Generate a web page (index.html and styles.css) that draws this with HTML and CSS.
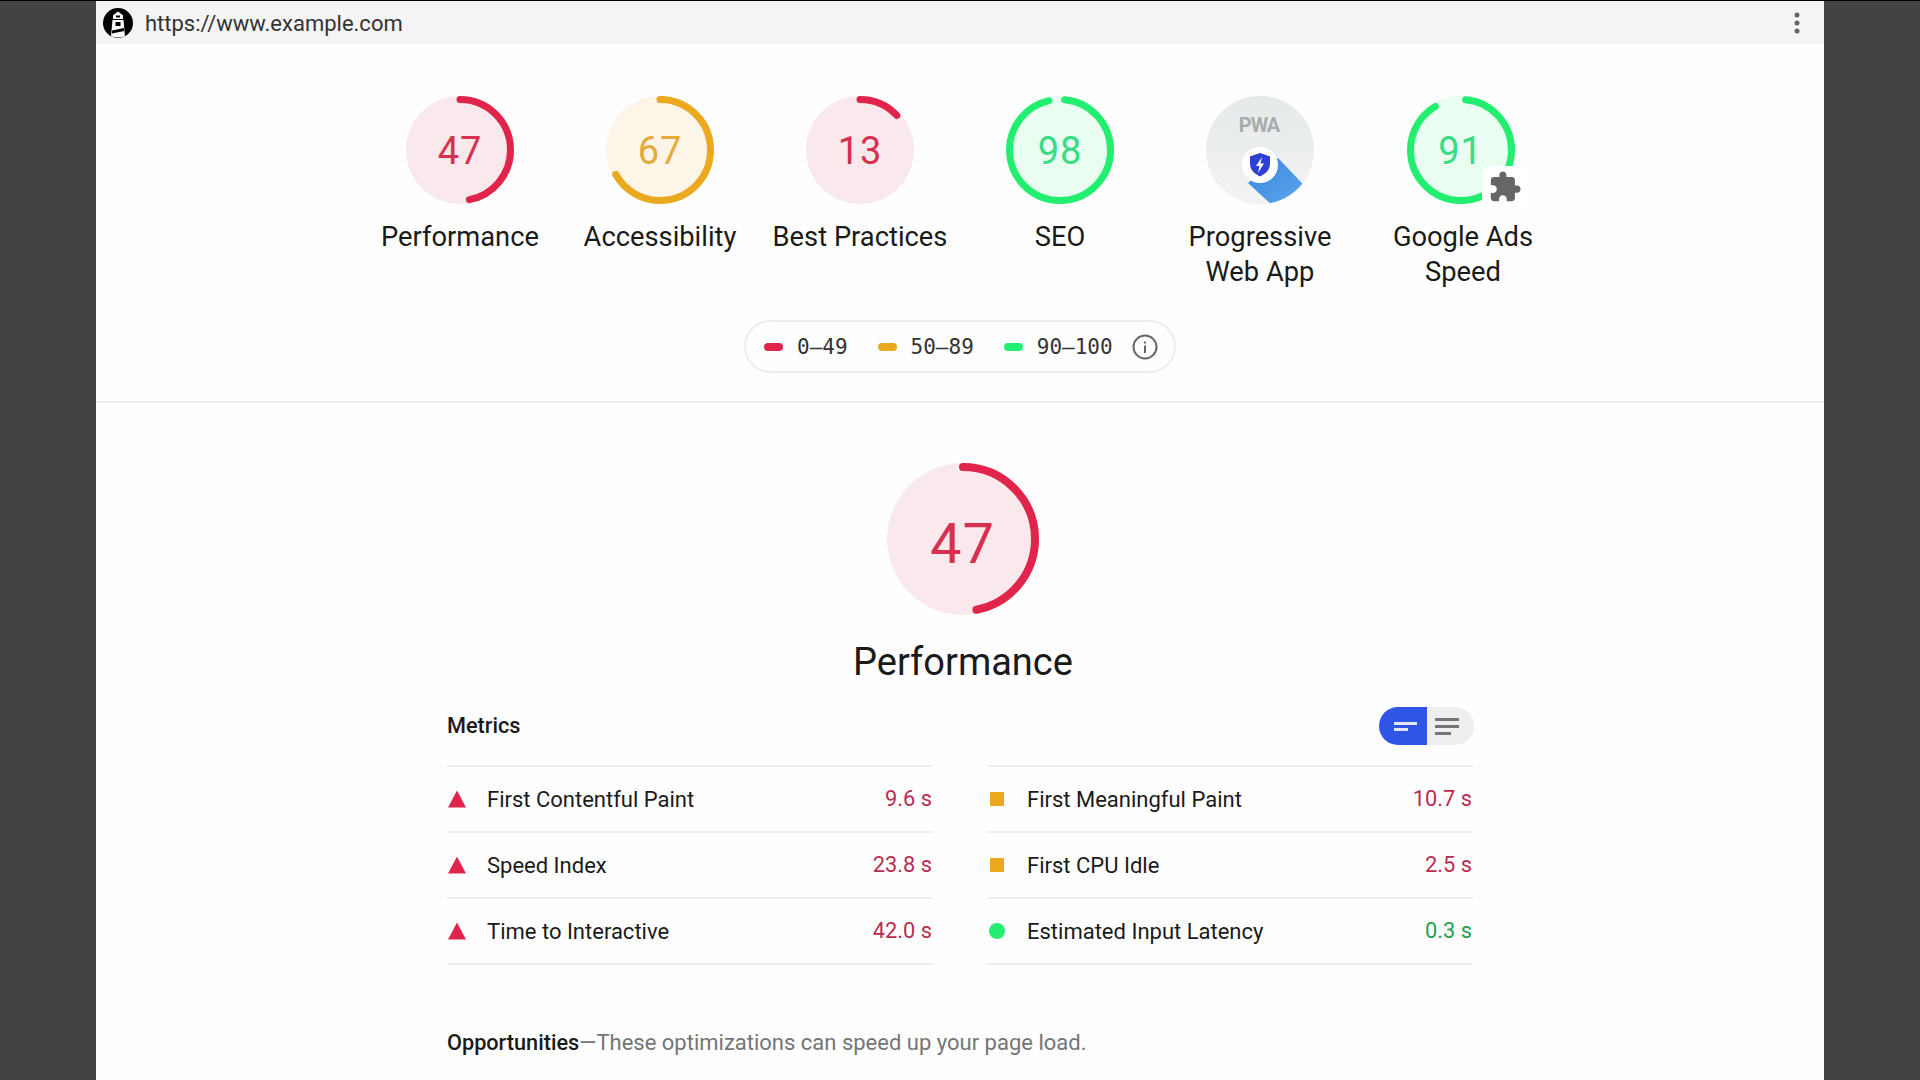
FILE: index.html
```html
<!DOCTYPE html>
<html lang="en">
<head>
    <meta charset="UTF-8">
    <title>Lighthouse Report</title>
    <link rel="stylesheet" href="styles.css">
</head>
<body>
    <div class="page">
        <header class="topbar">
            <svg class="logo" viewBox="0 0 30 30">
                <circle cx="15" cy="15" r="15" fill="#000"/>
                <path d="M15 3.500l5 3.800v3.700h-10V7.300z" fill="#fff"/>
                <path d="M9.500 12h11l1.500 16.500-7 1-7-1z" fill="#fff"/>
                <rect x="12.500" y="14" width="5" height="4" fill="#000"/>
                <path d="M9 22.500l12-2.500.3 3-12.300 2.500z" fill="#000"/>
                <rect x="13" y="7.500" width="4" height="2" fill="#000"/>
            </svg>
            <span class="url">https://www.example.com</span>
            <svg class="kebab" viewBox="0 0 6 22">
                <circle cx="3" cy="3" r="2.500"/>
                <circle cx="3" cy="11" r="2.500"/>
                <circle cx="3" cy="19" r="2.500"/>
            </svg>
        </header>

        <section class="tiles">
            <div class="tile">
                <div class="gauge red">
                    <svg viewBox="0 0 108 108"><circle class="fill" cx="54" cy="54" r="54"/><circle class="arc" cx="54" cy="54" r="50.500" pathLength="100" stroke-dasharray="47 100"/></svg>
                    <span class="score">47</span>
                </div>
                <div class="label">Performance</div>
            </div>
            <div class="tile">
                <div class="gauge orange">
                    <svg viewBox="0 0 108 108"><circle class="fill" cx="54" cy="54" r="54"/><circle class="arc" cx="54" cy="54" r="50.500" pathLength="100" stroke-dasharray="67 100"/></svg>
                    <span class="score">67</span>
                </div>
                <div class="label">Accessibility</div>
            </div>
            <div class="tile">
                <div class="gauge red">
                    <svg viewBox="0 0 108 108"><circle class="fill" cx="54" cy="54" r="54"/><circle class="arc" cx="54" cy="54" r="50.500" pathLength="100" stroke-dasharray="13 100"/></svg>
                    <span class="score">13</span>
                </div>
                <div class="label">Best Practices</div>
            </div>
            <div class="tile">
                <div class="gauge green">
                    <svg viewBox="0 0 108 108"><circle class="fill" cx="54" cy="54" r="54"/><circle class="arc" cx="54" cy="54" r="50.500" pathLength="100" stroke-dasharray="95 100" stroke-dashoffset="-1.500"/></svg>
                    <span class="score">98</span>
                </div>
                <div class="label">SEO</div>
            </div>
            <div class="tile">
                <div class="gauge">
                    <svg viewBox="0 0 108 108">
                        <defs>
                            <linearGradient id="pwaBg" x1="0" y1="0" x2="0" y2="1">
                                <stop offset="0" stop-color="#e6e9ea"/>
                                <stop offset="1" stop-color="#f1f3f4"/>
                            </linearGradient>
                            <linearGradient id="pwaTail" x1="0" y1="0" x2="1" y2="1">
                                <stop offset="0" stop-color="#3b86e2"/>
                                <stop offset="1" stop-color="#66aeee"/>
                            </linearGradient>
                            <clipPath id="pwaClip"><circle cx="54" cy="54" r="54"/></clipPath>
                        </defs>
                        <circle cx="54" cy="54" r="54" fill="url(#pwaBg)"/>
                        <polygon points="72,62 112,104 80,122 42,87" fill="url(#pwaTail)" clip-path="url(#pwaClip)"/>
                        <text class="pwa-text" x="53" y="36" text-anchor="middle">PWA</text>
                        <circle cx="54" cy="69" r="18" fill="#fff"/>
                        <path d="M54 57l10 3.500v7c0 6-4 10-10 13-6-3-10-7-10-13v-7z" fill="#2d3fd6"/>
                        <path d="M56 61l-6 9h3.500l-1.500 7 6-9.500h-3.500z" fill="#fff"/>
                    </svg>
                </div>
                <div class="label">Progressive<br>Web App</div>
            </div>
            <div class="tile">
                <div class="gauge gauge-ads green">
                    <svg viewBox="0 0 108 108"><circle class="fill" cx="54" cy="54" r="54"/><circle class="arc" cx="54" cy="54" r="50.500" pathLength="100" stroke-dasharray="90 100" stroke-dashoffset="-1.500"/></svg>
                    <span class="score">91</span>
                    <div class="badge">
                        <svg viewBox="0 0 24 24"><path d="M20.500 11H19V7c0-1.100-.9-2-2-2h-4V3.500C13 2.120 11.880 1 10.500 1S8 2.120 8 3.500V5H4c-1.100 0-1.990.9-1.990 2v3.800H3.500c1.490 0 2.700 1.210 2.700 2.700s-1.210 2.700-2.700 2.700H2V20c0 1.100.9 2 2 2h3.800v-1.500c0-1.490 1.210-2.700 2.700-2.700 1.490 0 2.700 1.210 2.700 2.700V22H17c1.100 0 2-.9 2-2v-4h1.500c1.380 0 2.500-1.120 2.500-2.500S21.880 11 20.500 11z"/></svg>
                    </div>
                </div>
                <div class="label label-ads">Google Ads<br>Speed</div>
            </div>
        </section>

        <div class="legend">
            <span class="range"><i class="dash bg-red"></i>0–49</span>
            <span class="range"><i class="dash bg-orange"></i>50–89</span>
            <span class="range range-last"><i class="dash bg-green"></i>90–100</span>
            <svg class="info" viewBox="0 0 26 26">
                <circle cx="13" cy="13" r="11.500" fill="none" stroke="#666" stroke-width="2"/>
                <rect x="12" y="11.500" width="2" height="7.500" fill="#666"/>
                <rect x="12" y="7.500" width="2" height="2" fill="#666"/>
            </svg>
        </div>

        <hr class="divider">

        <section class="category">
            <div class="gauge gauge-big red">
                <svg viewBox="0 0 152 152"><circle class="fill" cx="76" cy="76" r="76"/><circle class="arc" cx="76" cy="76" r="72" pathLength="100" stroke-dasharray="47 100"/></svg>
                <span class="score">47</span>
            </div>
            <h2 class="title">Performance</h2>

            <div class="metrics">
                <div class="metrics-head">
                    <span class="metrics-title">Metrics</span>
                    <div class="toggle">
                        <div class="toggle-on"><i class="line w23"></i><i class="line w14"></i></div>
                        <div class="toggle-off"><i class="line w24"></i><i class="line w24"></i><i class="line w16"></i></div>
                    </div>
                </div>
                <div class="metric-grid">
                    <div class="metric">
                        <i class="tri"></i><span class="name">First Contentful Paint</span><span class="value v-red">9.6 s</span>
                    </div>
                    <div class="metric">
                        <i class="square"></i><span class="name">First Meaningful Paint</span><span class="value v-red">10.7 s</span>
                    </div>
                    <div class="metric">
                        <i class="tri"></i><span class="name">Speed Index</span><span class="value v-red">23.8 s</span>
                    </div>
                    <div class="metric">
                        <i class="square"></i><span class="name">First CPU Idle</span><span class="value v-red">2.5 s</span>
                    </div>
                    <div class="metric">
                        <i class="tri"></i><span class="name">Time to Interactive</span><span class="value v-red">42.0 s</span>
                    </div>
                    <div class="metric">
                        <i class="dot"></i><span class="name">Estimated Input Latency</span><span class="value v-green">0.3 s</span>
                    </div>
                </div>
                <p class="opps"><strong>Opportunities</strong>—These optimizations can speed up your page load.</p>
            </div>
        </section>
    </div>
</body>
</html>
```

FILE: styles.css
```css
html, body {
    height: 100%;
}
body {
    margin: 0;
    background: #424441;
    border-top: 1px solid #000;
    box-sizing: border-box;
    overflow: hidden;
    font-family: Roboto, "Liberation Sans", sans-serif;
    color: #1a1a1a;
}
.page {
    width: 1728px;
    height: 1079px;
    margin: 0 auto;
    background: #fefefe;
    overflow: hidden;
}

/* url bar */
.topbar {
    display: flex;
    align-items: center;
    height: 43px;
    padding: 0 24px 0 7px;
    background: #f3f4f3;
}
.logo {
    width: 30px;
    height: 30px;
}
.url {
    margin-left: 12px;
    padding-top: 1px;
    font-size: 22px;
    color: #333;
}
.kebab {
    width: 6px;
    height: 22px;
    margin-left: auto;
    fill: #666;
}

/* score tiles */
.tiles {
    display: flex;
    justify-content: center;
    margin-top: 52px;
}
.tile {
    width: 200px;
    display: flex;
    flex-direction: column;
    align-items: center;
}
.gauge {
    position: relative;
    display: grid;
    place-items: center;
    width: 108px;
    height: 108px;
}
.gauge > svg {
    grid-area: 1 / 1;
    width: 100%;
    height: 100%;
    display: block;
}
.gauge .arc {
    fill: none;
    stroke-width: 7;
    stroke-linecap: round;
    transform: rotate(-90deg);
    transform-origin: center;
}
.gauge-big .arc {
    stroke-width: 8;
}
.gauge-ads {
    margin-left: 1px;
}
.score {
    grid-area: 1 / 1;
    position: relative;
    padding-top: 2px;
    font-size: 38px;
    font-weight: 400;
    letter-spacing: 1px;
}
.red .fill { fill: #f9e9ec; }
.red .arc { stroke: #e0244b; }
.red .score { color: #d8304f; }
.orange .fill { fill: #fdf6e8; }
.orange .arc { stroke: #eba91f; }
.orange .score { color: #e9a93a; }
.green .fill { fill: #e9fdf1; }
.green .arc { stroke: #22ee6f; }
.green .score { color: #38dc85; }
.pwa-text {
    font-family: Roboto, sans-serif;
    font-size: 20px;
    font-weight: 700;
    letter-spacing: -1px;
    fill: #a9abad;
}
.badge {
    position: absolute;
    left: 75px;
    top: 70px;
    width: 46px;
    height: 42px;
    display: flex;
    align-items: center;
    justify-content: center;
    background: #fff;
    border-radius: 10px;
}
.badge svg {
    width: 34px;
    height: 34px;
    fill: #666;
}
.label {
    margin-top: 16px;
    font-size: 27.300px;
    line-height: 35px;
    text-align: center;
    white-space: nowrap;
}
.label-ads {
    padding-left: 6px;
}

/* legend */
.legend {
    display: flex;
    align-items: center;
    box-sizing: border-box;
    width: 432px;
    height: 53px;
    margin: 30px auto 0;
    padding: 0 16px 0 18px;
    border: 2px solid #eee;
    border-radius: 27px;
    font-family: "DejaVu Sans Mono", monospace;
    font-size: 21px;
    color: #333;
}
.range {
    display: flex;
    align-items: center;
    margin-right: 30px;
    white-space: nowrap;
}
.range-last {
    margin-right: 0;
}
.dash {
    width: 19px;
    height: 8px;
    margin-right: 14px;
    border-radius: 4px;
}
.bg-red { background: #e0244b; }
.bg-orange { background: #eba91f; }
.bg-green { background: #22ee6f; }
.info {
    flex: none;
    width: 26px;
    height: 26px;
    margin-left: auto;
}
.divider {
    margin: 28px 0 0;
    border: 0;
    border-top: 2px solid #eee;
}

/* performance section */
.category {
    display: flex;
    flex-direction: column;
    align-items: center;
    margin-top: 60px;
}
.gauge-big {
    width: 152px;
    height: 152px;
    margin-left: 5px;
}
.gauge-big .score {
    padding-top: 9px;
    font-size: 56px;
}
.title {
    margin: 22px 0 0 6px;
    font-size: 38px;
    font-weight: 400;
    line-height: 50px;
}
.metrics {
    width: 1026px;
    margin-top: 20px;
}
.metrics-head {
    display: flex;
    align-items: center;
    justify-content: space-between;
    margin-bottom: 20px;
}
.metrics-title {
    padding-bottom: 2px;
    font-size: 21.700px;
    font-weight: 500;
}
.toggle {
    display: flex;
    height: 38px;
    width: 95px;
    margin-right: -1px;
}
.toggle-on, .toggle-off {
    display: flex;
    flex-direction: column;
    justify-content: center;
}
.toggle-on {
    width: 48px;
    background: #2f55e6;
    border-radius: 19px 0 0 19px;
    padding-left: 15px;
    box-sizing: border-box;
    gap: 3px;
}
.toggle-on .line { background: #dfe8ff; }
.toggle-off {
    flex: 1;
    background: #eee;
    border-radius: 0 19px 19px 0;
    padding-left: 8px;
    gap: 4px;
}
.toggle-off .line { background: #757575; }
.line {
    display: block;
    height: 3px;
}
.w23 { width: 23px; }
.w14 { width: 14px; }
.w24 { width: 24px; }
.w16 { width: 16px; }

.metric-grid {
    display: grid;
    grid-template-columns: 486px 486px;
    column-gap: 54px;
}
.metric {
    display: flex;
    align-items: center;
    box-sizing: border-box;
    height: 66px;
    border-bottom: 2px solid #eee;
    font-size: 22px;
}
.metric:nth-child(-n+2) {
    height: 68px;
    border-top: 2px solid #eee;
}
.tri, .square, .dot {
    flex: none;
    display: block;
}
.tri {
    width: 18px;
    height: 17px;
    margin: 0 21px 0 1px;
    background: #e0244b;
    clip-path: polygon(50% 0, 100% 100%, 0 100%);
}
.square {
    width: 14px;
    height: 14px;
    margin: 0 23px 0 3px;
    background: #eba91f;
}
.dot {
    width: 16px;
    height: 16px;
    margin: 0 22px 0 2px;
    border-radius: 50%;
    background: #22ee6f;
}
.name {
    flex: 1;
}
.value {
    margin-right: 1px;
    padding-bottom: 2px;
    font-size: 21.800px;
}
.v-red { color: #b92c50; }
.v-green { color: #22a34a; }
.opps {
    margin: 63px 0 0;
    font-size: 22px;
    line-height: 30px;
    color: #757575;
}
.opps strong {
    font-size: 21.700px;
    font-weight: 500;
    color: #1a1a1a;
}
```
